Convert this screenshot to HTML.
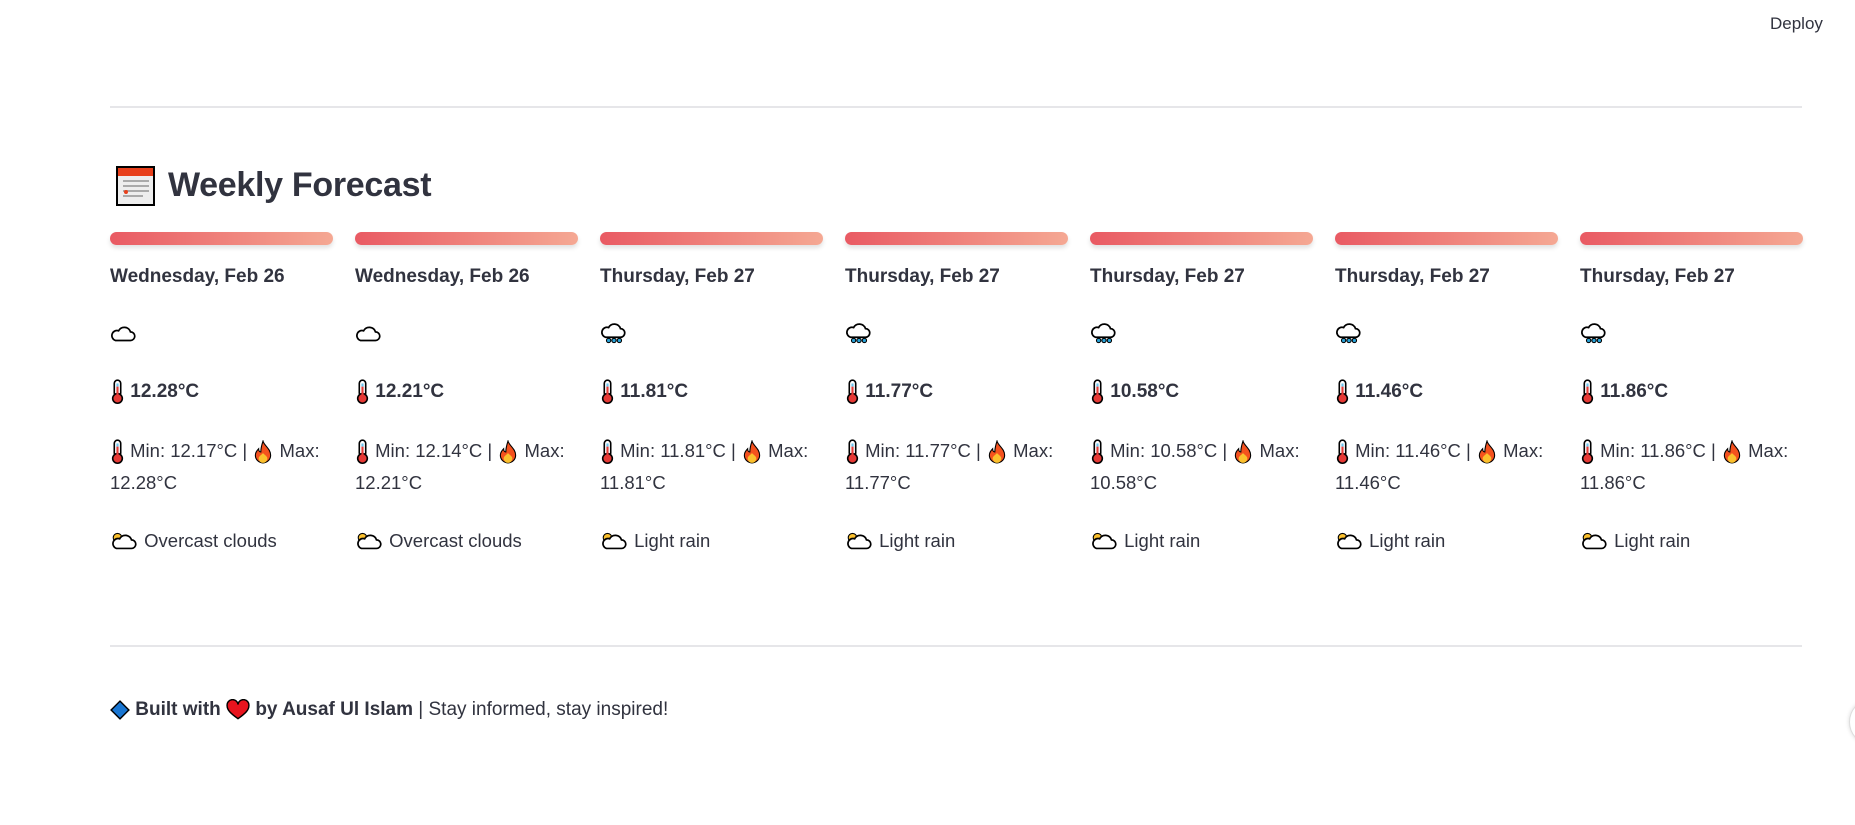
<!DOCTYPE html>
<html><head><meta charset="utf-8"><style>
*{margin:0;padding:0;box-sizing:border-box}
body{width:1855px;height:825px;background:#fff;font-family:"Liberation Sans",sans-serif;color:#31333f;position:relative;overflow:hidden}
.hr{position:absolute;left:110px;width:1692px;height:2px;background:#e6e6e9}
.deploy{position:absolute;left:1770px;top:14px;font-size:17px;color:#31333f}
.title{position:absolute;left:168px;top:166px;font-size:34px;font-weight:bold;color:#31333f;letter-spacing:-0.3px}
.col{position:absolute;top:0;width:223px}
.bar{position:absolute;top:232px;left:0;width:223px;height:13px;border-radius:7px;background:linear-gradient(90deg,#e95a63,#f5a893);box-shadow:0 3px 5px rgba(0,0,0,.12)}
.t{position:absolute;left:0;white-space:nowrap;font-size:18.5px;line-height:22px}
.b{font-weight:bold;font-size:19px}
svg{vertical-align:middle}
</style></head><body>
<div class="deploy">Deploy</div>
<div class="hr" style="top:106px"></div>
<svg style="position:absolute;left:115px;top:165px" width="41" height="42" viewBox="0 0 41 42"><rect x="1" y="1" width="39" height="40" fill="#000"/><rect x="3" y="3" width="35" height="36" fill="#eee"/><rect x="3" y="3" width="35" height="8" fill="#e8401c"/><g fill="#aaa"><rect x="8" y="15" width="26" height="2"/><rect x="8" y="20" width="26" height="2"/><rect x="8" y="25" width="26" height="2"/><rect x="8" y="30" width="20" height="2"/></g><circle cx="11" cy="27" r="2" fill="#e8401c"/></svg>
<div class="title">Weekly Forecast</div>

<svg width="0" height="0" style="position:absolute"><defs>
<g id="cl"><path d="M5 17h14a4 4 0 0 0 0-8 6 6 0 0 0-11-1 4.5 4.5 0 0 0-3 9z" fill="#fff" stroke="#000" stroke-width="1.6"/></g>
<g id="rn"><path d="M5 14h14a4 4 0 0 0 0-8 6 6 0 0 0-11-1 4.5 4.5 0 0 0-3 9z" fill="#fff" stroke="#000" stroke-width="1.6"/><g fill="#29a3d9" stroke="#000" stroke-width="1"><circle cx="8" cy="17" r="2"/><circle cx="13" cy="17" r="2"/><circle cx="18" cy="17" r="2"/></g></g>
<g id="th"><rect x="4" y="1" width="6" height="15" rx="3" fill="#fff" stroke="#000" stroke-width="1.5"/><circle cx="7" cy="18" r="4.5" fill="#e53935" stroke="#000" stroke-width="1.5"/><rect x="6" y="4" width="2" height="3" fill="#6cc5ef"/><rect x="6" y="7" width="2" height="9" fill="#e53935"/></g>
<g id="fi"><path d="M10 1c1 4 7 7 7 13a7 7 0 0 1-14 0c0-3 2-5 3-6 0 2 1 3 2 3 0-4 1-7 2-10z" fill="#f4511e" stroke="#000" stroke-width="1"/><path d="M10 12c2 2 4 3 4 5a4 4 0 0 1-8 0c0-2 2-3 4-5z" fill="#fbc02d"/></g>
<g id="sc"><circle cx="7" cy="7" r="4" fill="#fbc02d" stroke="#000" stroke-width="1"/><path d="M6 17h14a4 4 0 0 0 0-8 6 6 0 0 0-11-1 4.5 4.5 0 0 0-3 9z" fill="#fff" stroke="#000" stroke-width="1.6"/></g>
</defs></svg>

<div class="col" style="left:110px"><div class="bar"></div>
<div class="t b" style="top:266px">Wednesday, Feb 26</div>
<div class="t" style="top:322px"><svg width="28" height="24" viewBox="0 0 26 22"><use href="#cl"/></svg></div>
<div class="t b" style="top:379px"><svg width="15" height="26" viewBox="0 0 14 24"><use href="#th"/></svg> 12.28°C</div>
<div class="t" style="top:439px"><svg width="15" height="26" viewBox="0 0 14 24"><use href="#th"/></svg> Min: 12.17°C | <svg width="22" height="24" viewBox="0 0 20 22"><use href="#fi"/></svg> Max:</div>
<div class="t" style="top:472px">12.28°C</div>
<div class="t" style="top:530px"><svg width="29" height="24" viewBox="0 0 27 22"><use href="#sc"/></svg> Overcast clouds</div></div>

<div class="col" style="left:355px"><div class="bar"></div>
<div class="t b" style="top:266px">Wednesday, Feb 26</div>
<div class="t" style="top:322px"><svg width="28" height="24" viewBox="0 0 26 22"><use href="#cl"/></svg></div>
<div class="t b" style="top:379px"><svg width="15" height="26" viewBox="0 0 14 24"><use href="#th"/></svg> 12.21°C</div>
<div class="t" style="top:439px"><svg width="15" height="26" viewBox="0 0 14 24"><use href="#th"/></svg> Min: 12.14°C | <svg width="22" height="24" viewBox="0 0 20 22"><use href="#fi"/></svg> Max:</div>
<div class="t" style="top:472px">12.21°C</div>
<div class="t" style="top:530px"><svg width="29" height="24" viewBox="0 0 27 22"><use href="#sc"/></svg> Overcast clouds</div></div>

<div class="col" style="left:600px"><div class="bar"></div>
<div class="t b" style="top:266px">Thursday, Feb 27</div>
<div class="t" style="top:322px"><svg width="28" height="24" viewBox="0 0 26 22"><use href="#rn"/></svg></div>
<div class="t b" style="top:379px"><svg width="15" height="26" viewBox="0 0 14 24"><use href="#th"/></svg> 11.81°C</div>
<div class="t" style="top:439px"><svg width="15" height="26" viewBox="0 0 14 24"><use href="#th"/></svg> Min: 11.81°C | <svg width="22" height="24" viewBox="0 0 20 22"><use href="#fi"/></svg> Max:</div>
<div class="t" style="top:472px">11.81°C</div>
<div class="t" style="top:530px"><svg width="29" height="24" viewBox="0 0 27 22"><use href="#sc"/></svg> Light rain</div></div>

<div class="col" style="left:845px"><div class="bar"></div>
<div class="t b" style="top:266px">Thursday, Feb 27</div>
<div class="t" style="top:322px"><svg width="28" height="24" viewBox="0 0 26 22"><use href="#rn"/></svg></div>
<div class="t b" style="top:379px"><svg width="15" height="26" viewBox="0 0 14 24"><use href="#th"/></svg> 11.77°C</div>
<div class="t" style="top:439px"><svg width="15" height="26" viewBox="0 0 14 24"><use href="#th"/></svg> Min: 11.77°C | <svg width="22" height="24" viewBox="0 0 20 22"><use href="#fi"/></svg> Max:</div>
<div class="t" style="top:472px">11.77°C</div>
<div class="t" style="top:530px"><svg width="29" height="24" viewBox="0 0 27 22"><use href="#sc"/></svg> Light rain</div></div>

<div class="col" style="left:1090px"><div class="bar"></div>
<div class="t b" style="top:266px">Thursday, Feb 27</div>
<div class="t" style="top:322px"><svg width="28" height="24" viewBox="0 0 26 22"><use href="#rn"/></svg></div>
<div class="t b" style="top:379px"><svg width="15" height="26" viewBox="0 0 14 24"><use href="#th"/></svg> 10.58°C</div>
<div class="t" style="top:439px"><svg width="15" height="26" viewBox="0 0 14 24"><use href="#th"/></svg> Min: 10.58°C | <svg width="22" height="24" viewBox="0 0 20 22"><use href="#fi"/></svg> Max:</div>
<div class="t" style="top:472px">10.58°C</div>
<div class="t" style="top:530px"><svg width="29" height="24" viewBox="0 0 27 22"><use href="#sc"/></svg> Light rain</div></div>

<div class="col" style="left:1335px"><div class="bar"></div>
<div class="t b" style="top:266px">Thursday, Feb 27</div>
<div class="t" style="top:322px"><svg width="28" height="24" viewBox="0 0 26 22"><use href="#rn"/></svg></div>
<div class="t b" style="top:379px"><svg width="15" height="26" viewBox="0 0 14 24"><use href="#th"/></svg> 11.46°C</div>
<div class="t" style="top:439px"><svg width="15" height="26" viewBox="0 0 14 24"><use href="#th"/></svg> Min: 11.46°C | <svg width="22" height="24" viewBox="0 0 20 22"><use href="#fi"/></svg> Max:</div>
<div class="t" style="top:472px">11.46°C</div>
<div class="t" style="top:530px"><svg width="29" height="24" viewBox="0 0 27 22"><use href="#sc"/></svg> Light rain</div></div>

<div class="col" style="left:1580px"><div class="bar"></div>
<div class="t b" style="top:266px">Thursday, Feb 27</div>
<div class="t" style="top:322px"><svg width="28" height="24" viewBox="0 0 26 22"><use href="#rn"/></svg></div>
<div class="t b" style="top:379px"><svg width="15" height="26" viewBox="0 0 14 24"><use href="#th"/></svg> 11.86°C</div>
<div class="t" style="top:439px"><svg width="15" height="26" viewBox="0 0 14 24"><use href="#th"/></svg> Min: 11.86°C | <svg width="22" height="24" viewBox="0 0 20 22"><use href="#fi"/></svg> Max:</div>
<div class="t" style="top:472px">11.86°C</div>
<div class="t" style="top:530px"><svg width="29" height="24" viewBox="0 0 27 22"><use href="#sc"/></svg> Light rain</div></div>

<div class="hr" style="top:645px"></div>
<div class="t" style="left:110px;top:699px;font-size:19px"><svg width="20" height="20" viewBox="0 0 18 18"><path d="M9 1L17 9L9 17L1 9Z" fill="#1976d2" stroke="#000" stroke-width="1.3"/></svg> <b>Built with</b> <svg width="24" height="22" viewBox="0 0 22 20"><path d="M11 18C4 13 1 10 1 6a5 5 0 0 1 10-1 5 5 0 0 1 10 1c0 4-3 7-10 12z" fill="#e8141e" stroke="#000" stroke-width="1.3"/></svg> <b>by Ausaf Ul Islam</b> | Stay informed, stay inspired!</div>
<div style="position:absolute;left:1849px;top:700px;width:40px;height:44px;border-radius:50%;border:1px solid #ddd;background:#fff;box-shadow:0 0 4px rgba(0,0,0,.15)"></div>
</body></html>
